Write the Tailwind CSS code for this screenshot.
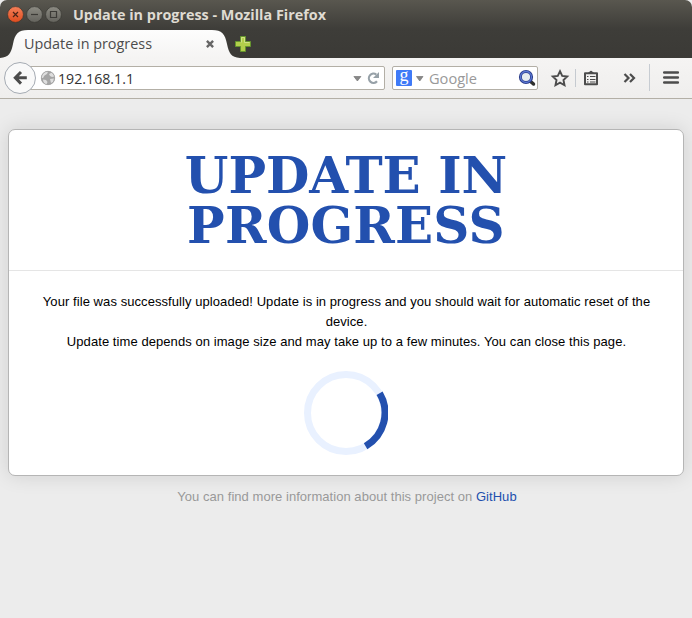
<!DOCTYPE html>
<html lang="en">
<head>
<meta charset="utf-8">
<title>Update in progress</title>
<script src="https://cdn.jsdelivr.net/npm/@tailwindcss/browser@4"></script>
</head>
<body class="h-[618px] w-[692px] overflow-hidden bg-[#ececec] font-['Open_Sans',sans-serif]">
<div class="flex h-full flex-col">
  <header class="flex h-[58px] flex-col rounded-t-[7px] bg-gradient-to-b from-[#59574f] via-[#3e3d39] via-50% to-[#3b3a36]">
    <div class="flex h-[29px] items-center pl-[7px]">
      <svg class="h-[18px] w-[55px] shrink-0" viewBox="0 0 55 18" fill="none">
        <defs>
          <linearGradient id="close" x2="0" y2="1"><stop stop-color="#f58059"/><stop offset="1" stop-color="#df4c1e"/></linearGradient>
          <linearGradient id="btn" x2="0" y2="1"><stop stop-color="#8c8b83"/><stop offset="1" stop-color="#64635d"/></linearGradient>
        </defs>
        <circle cx="8.500" cy="8.500" r="7.900" fill="url(#close)" stroke="#33302b" stroke-width=".6"/>
        <path d="M6 6l5 5m0-5l-5 5" stroke="#4b2417" stroke-width="1.200"/>
        <circle cx="27.500" cy="8.500" r="7.900" fill="url(#btn)" stroke="#33322e" stroke-width=".6"/>
        <path d="M24 8.500h7" stroke="#3c3b37" stroke-width="1.200"/>
        <circle cx="46.500" cy="8.500" r="7.900" fill="url(#btn)" stroke="#33322e" stroke-width=".6"/>
        <path d="M43.500 5.500h6v6h-6z" stroke="#3c3b37" stroke-width="1.200"/>
      </svg>
      <svg class="h-[29px] w-[300px]" viewBox="0 0 300 29"><text x="11" y="20" textLength="253" lengthAdjust="spacingAndGlyphs" class="fill-[#dfdbd2] text-[14px] font-bold">Update in progress - Mozilla Firefox</text></svg>
    </div>
    <div class="flex h-[29px]">
      <svg class="h-[29px] w-[260px]" viewBox="0 0 260 29" fill="none">
        <defs><linearGradient id="tab" x2="0" y2="1"><stop stop-color="#fdfdfd"/><stop offset="1" stop-color="#f5f4f3"/></linearGradient></defs>
        <path d="M0 29C9 28.500 11 24 13 15C15 5 18 1 28 1H212C222 1 225 5 227 15C229 24 231 28.500 240 29Z" fill="url(#tab)"/>
        <text x="24" y="20" textLength="128" lengthAdjust="spacingAndGlyphs" class="fill-[#4c4c4c] text-[14.5px]">Update in progress</text>
        <path d="M206.900 11.900l6.200 6.200m0-6.200l-6.200 6.200" stroke="#666" stroke-width="2.400"/>
        <path d="M240.500 7.500h5v5h5v5h-5v5h-5v-5h-5v-5h5z" fill="#b2cf4b" stroke="#65942e"/>
        <path d="M241.500 13.500v-5h3v5h5" stroke="#d0e285"/>
      </svg>
    </div>
  </header>

  <nav class="flex h-[41px] shrink-0 items-center border-b border-[#b3afa6] bg-gradient-to-b from-[#f5f4f3] to-[#efeeed] pl-[4px]">
    <div class="relative z-10 mr-[-17px] flex size-[32px] shrink-0 items-center justify-center rounded-full border border-[#a5abb3] bg-[#f9f9f9]">
      <svg class="h-[16px] w-[16px]" viewBox="0 0 16 16" fill="none" stroke="#4c4c4c" stroke-width="3"><path d="M9 2L3.300 7.800l5.700 5.800M3.500 7.800H14.800"/></svg>
    </div>
    <div class="flex h-[24px] w-[366px] shrink-0 items-center rounded-r-[2px] border border-[#b3afa6] bg-white pl-[20px]">
      <svg class="size-[16px] shrink-0" viewBox="0 0 16 16">
        <circle cx="8" cy="8" r="7" fill="#a5a5a5"/>
        <path d="M2.500 4.500C4 2 6 1.500 8 1.800L7 4L4.500 5.500L3 8L1.500 8ZM9 4l3-1.500 2.500 4L12 7 10 6ZM3 9.500l3 .5 1.500 2L6.500 14.500C4.500 14 3 12 3 9.500ZM10 9l4-.5-1 3.500-2 1Z" fill="#dedede"/>
        <circle cx="8" cy="8" r="6.700" fill="none" stroke="#a0a0a0" stroke-width=".7"/>
      </svg>
      <svg class="h-[22px] w-[100px]" viewBox="0 0 100 22"><text x="2" y="17" textLength="76" lengthAdjust="spacingAndGlyphs" class="fill-[#333] text-[14px]">192.168.1.1</text></svg>
      <svg class="ml-auto mr-[3px] h-[16px] w-[28px]" viewBox="0 0 28 16" fill="none">
        <path d="M.9 6.500h7l-3.500 4.500z" fill="#888" stroke="#777" stroke-width=".7"/>
        <path d="M23.300 4.600A4.600 4.600 0 1 0 24 11.200" stroke="#97a1a8" stroke-width="2.200"/>
        <path d="M26 2v6h-6z" fill="#97a1a8"/>
      </svg>
    </div>
    <div class="ml-[7px] flex h-[24px] w-[146px] shrink-0 items-center rounded-[2px] border border-[#b3afa6] bg-white pl-[3px]">
      <svg class="size-[16px] shrink-0 overflow-visible" viewBox="0 0 16 16"><rect width="16" height="16" rx="1" fill="#3f7af7"/><text x="8" y="11" text-anchor="middle" class="fill-white font-['Liberation_Serif',serif] text-[18px]">g</text></svg>
      <svg class="ml-[4px] h-[16px] w-[9px]" viewBox="0 0 9 16"><path d="M.5 6.500h6.500l-3.250 4.500z" fill="#888" stroke="#777" stroke-width=".7"/></svg>
      <svg class="h-[22px] w-[70px]" viewBox="0 0 70 22"><text x="4" y="17" textLength="48" lengthAdjust="spacingAndGlyphs" class="fill-[#999] text-[14px]">Google</text></svg>
      <svg class="ml-auto mr-[1px] size-[18px]" viewBox="0 0 18 18" fill="none">
        <path d="M12 12l3.500 3" stroke="#30302f" stroke-width="3.500" stroke-linecap="round"/>
        <circle cx="8" cy="8" r="5.600" fill="#e5ebef" stroke="#2b3c88" stroke-width="3"/>
        <circle cx="8" cy="8" r="5.500" stroke="#5b79d6" stroke-width="1.300"/>
      </svg>
    </div>
    <svg class="h-[40px] w-[154px] shrink-0" viewBox="538 58 154 40" fill="none" stroke="#4c4c4c">
      <path d="M560 71.200l2.200 4.700 5 .6-3.700 3.500 1 5.200-4.500-2.600-4.500 2.600 1-5.200-3.700-3.500 5-.6z" stroke-width="1.900"/>
      <path d="M575.500 69v18" stroke="#c5cad0"/>
      <path d="M585 73.200h12v11h-12z" stroke-width="2" stroke-linejoin="round"/>
      <path d="M588.500 73l2.500-2 2.500 2z" fill="#4c4c4c"/>
      <path d="M587 76.500h1.500M590 76.500h5.500M587 79.500h1.500M590 79.500h5.500M587 82h1.500M590 82h5.500" stroke-width="1"/>
      <path d="M624.500 74l4 4-4 4M630 74l4 4-4 4" stroke-width="2.200"/>
      <path d="M649.500 64v27" stroke="#c7ccd2"/>
      <path d="M664.300 72.500h13.500M664.300 77.500h13.500M664.300 82.500h13.500" stroke-width="2.700" stroke-linecap="round"/>
    </svg>
  </nav>

  <main class="flex-1 px-[8px] pt-[30px] font-['Liberation_Sans',sans-serif] text-[13px] leading-[20px]">
    <section class="h-[347px] rounded-[7px] border border-[#b5b5b5] bg-white text-center text-black shadow-[0_0_20px_rgba(0,0,0,0.12)]">
      <div class="h-[141px] border-b border-[#e5e5e5] pt-[21px]">
        <h1 class="font-['DejaVu_Serif',serif] text-[50px] leading-[50px] font-bold text-[#2350ae]">UPDATE IN<br><span class="tracking-[0.2px]">PROGRESS</span></h1>
      </div>
      <p class="pt-[21px] pl-[1px] whitespace-nowrap tracking-[0.07px]">Your file was successfully uploaded! Update is in progress and you should wait for automatic reset of the<br>device.<br>Update time depends on image size and may take up to a few minutes. You can close this page.</p>
      <svg class="mx-auto mt-[19px] size-[84px]" viewBox="0 0 84 84" fill="none" stroke-width="7">
        <circle cx="42" cy="42" r="38.500" stroke="#e9f1ff"/>
        <path d="M75.600 22.200A38.500 38.500 0 0 1 61.600 75.200" stroke="#2350ae"/>
      </svg>
    </section>
    <p class="mt-[11px] pl-[2px] text-center tracking-[0.04px] text-[#999]">You can find more information about this project on <a class="text-[#2350ae]">GitHub</a></p>
  </main>
</div>
</body>
</html>
